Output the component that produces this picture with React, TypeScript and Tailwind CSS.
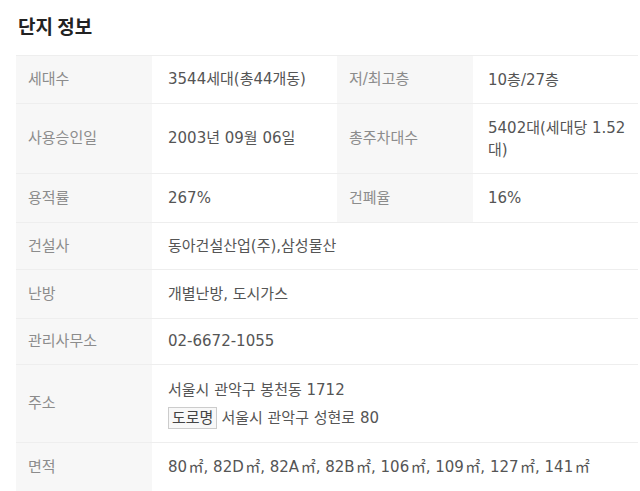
const rows: { label: string; value: React.ReactNode; label2?: string; value2?: React.ReactNode; h: string }[] = [
  { label: '세대수', value: '3544세대(총44개동)', label2: '저/최고층', value2: '10층/27층', h: 'h-[48px]' },
  { label: '사용승인일', value: '2003년 09월 06일', label2: '총주차대수', value2: '5402대(세대당 1.52 대)', h: 'h-[70px]' },
  { label: '용적률', value: '267%', label2: '건폐율', value2: '16%', h: 'h-[49px]' },
  { label: '건설사', value: '동아건설산업(주),삼성물산', h: 'h-[47px]' },
  { label: '난방', value: '개별난방, 도시가스', h: 'h-[49px]' },
  { label: '관리사무소', value: '02-6672-1055', h: 'h-[46px]' },
  {
    label: '주소',
    value: (
      <div className="leading-[28px]">
        <div>서울시 관악구 봉천동 1712</div>
        <div>
          <span className="mr-1 border border-[#ccc] bg-[#f8f8f8] px-[3px] py-[1px] text-[#444]">도로명</span>
          서울시 관악구 성현로 80
        </div>
      </div>
    ),
    h: 'h-[78px]',
  },
  {
    label: '면적',
    value: '80\u200a㎡, 82D\u200a㎡, 82A\u200a㎡, 82B\u200a㎡, 106\u200a㎡, 109\u200a㎡, 127\u200a㎡, 141\u200a㎡',
    h: 'h-[49px]',
  },
];

export default function App() {
  return (
    <div
      className="h-[491px] w-[640px] overflow-hidden bg-white"
      style={{ fontFamily: '"DejaVu Sans", "Noto Sans CJK KR", sans-serif' }}
    >
      <h2
        className="pl-[18px] pt-[13px] text-[19px] font-bold leading-[26px] text-[#222]"
        style={{ fontFamily: '"Noto Sans CJK KR", sans-serif' }}
      >
        단지 정보
      </h2>
      <table className="ml-[16px] mt-[16px] w-[622px] border-collapse border-t border-[#eee] text-[15px] text-[#555]">
        <colgroup>
          <col className="w-[136px]" />
          <col className="w-[185px]" />
          <col className="w-[136px]" />
          <col />
        </colgroup>
        <tbody>
          {rows.map((r) => (
            <tr key={r.label} className={`${r.h} border-b border-[#eee]`}>
              <th className="bg-[#f7f7f7] pl-[12px] text-left align-middle font-normal text-[#8c8c8c]">{r.label}</th>
              {r.label2 ? (
                <>
                  <td className="pl-[16px] pr-[12px] align-middle">{r.value}</td>
                  <th className="bg-[#f7f7f7] pl-[12px] text-left align-middle font-normal text-[#8c8c8c]">{r.label2}</th>
                  <td className="pl-[15px] pr-[2px] align-middle leading-[22px]">{r.value2}</td>
                </>
              ) : (
                <td colSpan={3} className="pl-[16px] align-middle">
                  {r.value}
                </td>
              )}
            </tr>
          ))}
        </tbody>
      </table>
    </div>
  );
}
